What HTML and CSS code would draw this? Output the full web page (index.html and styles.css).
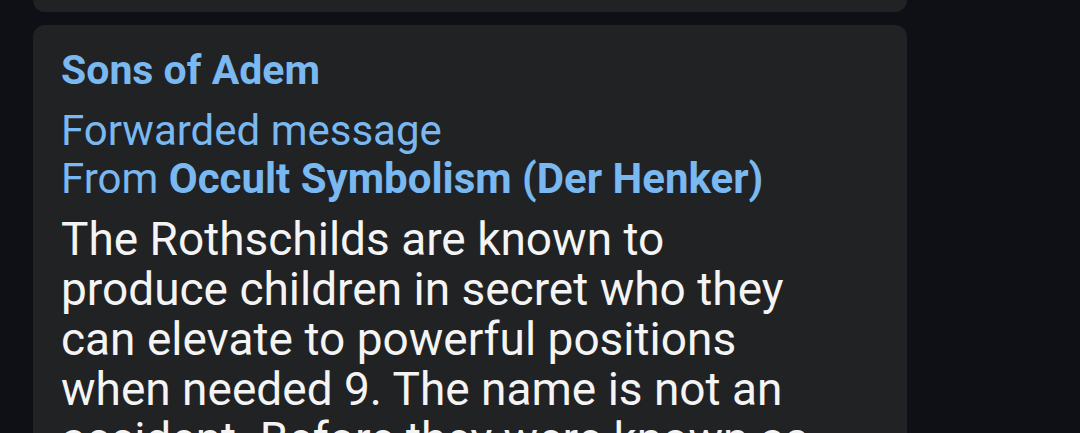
FILE: index.html
```html
<!DOCTYPE html>
<html>
<head>
<meta charset="utf-8">
<link rel="stylesheet" href="styles.css">
</head>
<body>
<div class="chat">
  <div class="bubble prev"></div>
  <div class="bubble msg">
    <div class="sender">Sons of Adem</div>
    <div class="fwd">
      <div>Forwarded message</div>
      <div>From <span class="src">Occult Symbolism (Der Henker)</span></div>
    </div>
    <div class="body">The Rothschilds are known to produce children in secret who they can elevate to powerful positions when needed 9. The name is not an accident. Before they were known as the Rothschilds, the</div>
  </div>
</div>
</body>
</html>
```
FILE: styles.css
```css
html, body {
  margin: 0;
  padding: 0;
  background: #0e1016;
  width: 1080px;
  height: 433px;
  overflow: hidden;
}
.chat {
  display: flex;
  flex-direction: column;
  gap: 13px;
  padding-left: 33px;
  margin-top: -40px;
  font-family: Roboto, "Noto Sans", sans-serif;
}
.bubble {
  width: 874px;
  background: #212224;
  border-radius: 12px;
  box-sizing: border-box;
}
.prev {
  height: 52px;
}
.msg {
  padding: 20px 28px 0 28px;
  height: 500px;
}
.sender {
  color: #79b8f0;
  font-weight: 700;
  font-size: 41px;
  line-height: 50px;
}
.fwd {
  color: #79b8f0;
  font-size: 42px;
  line-height: 48px;
  margin-top: 12px;
}
.src {
  font-weight: 700;
}
.body {
  color: #f4f4f4;
  font-size: 46px;
  line-height: 50px;
  margin-top: 11px;
  width: 760px;
}
```
